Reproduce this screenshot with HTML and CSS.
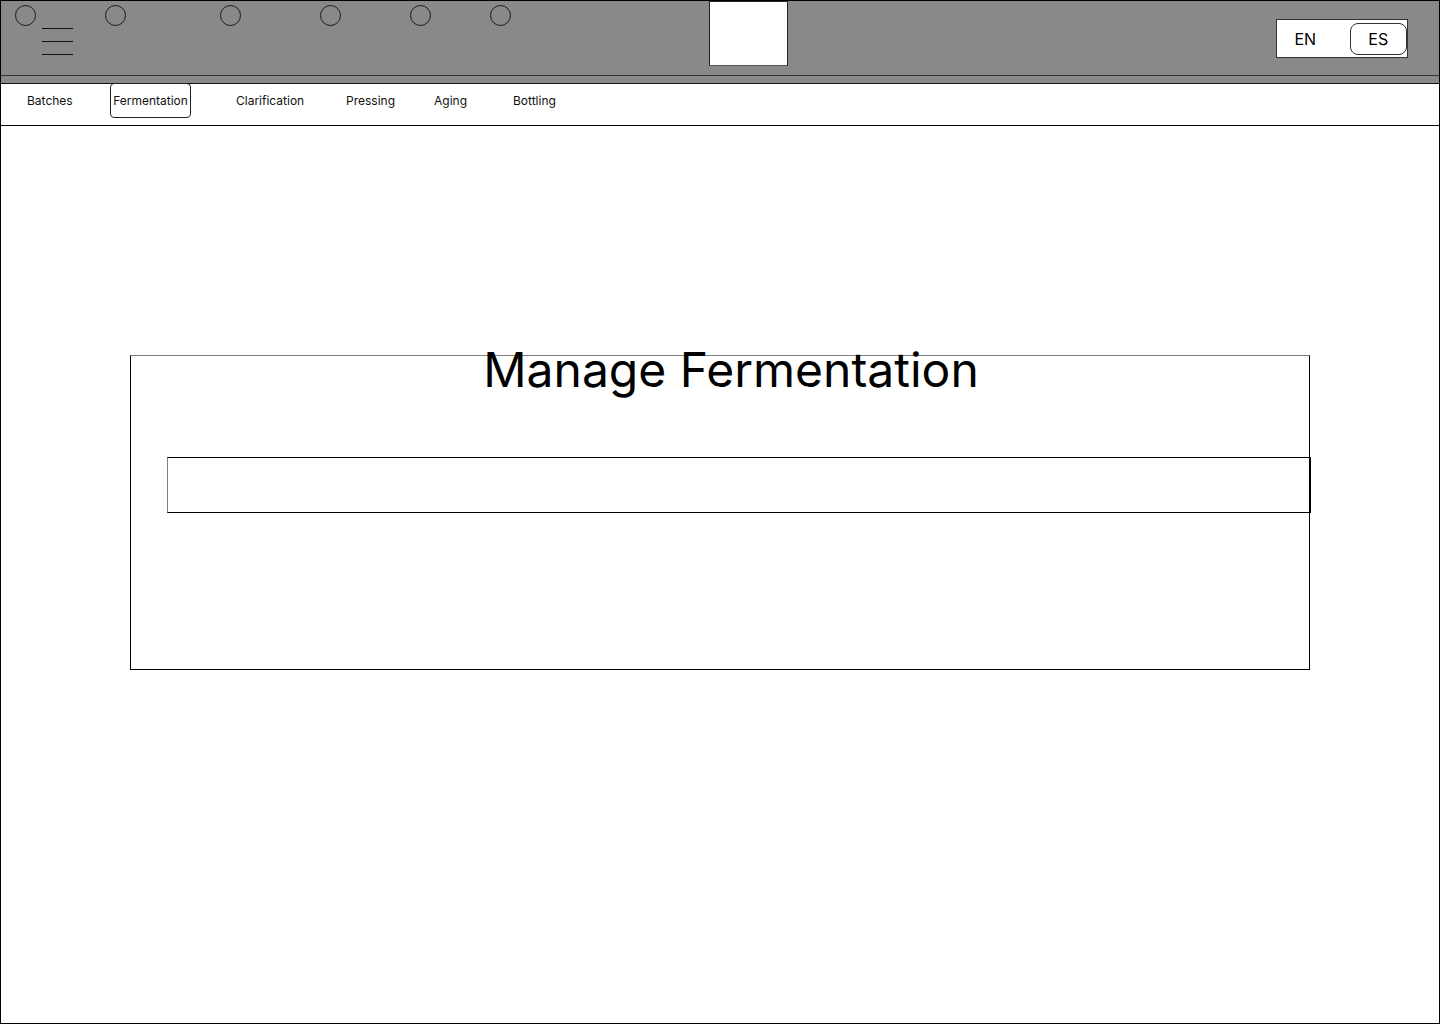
FILE: index.html
```html
<!DOCTYPE html>
<html lang="en">
<head>
<meta charset="utf-8">
<title>Manage Fermentation</title>
<link rel="stylesheet" href="styles.css">
</head>
<body>
<div class="page">
  <header class="topbar">
    <div class="dots">
      <span class="dot d1"></span>
      <span class="dot d2"></span>
      <span class="dot d3"></span>
      <span class="dot d4"></span>
      <span class="dot d5"></span>
      <span class="dot d6"></span>
    </div>
    <div class="burger"><span></span><span></span><span></span></div>
    <div class="logo"></div>
    <div class="lang">
      <span class="lang-opt">EN</span>
      <span class="lang-opt active">ES</span>
    </div>
  </header>
  <div class="strip"></div>
  <nav class="tabs">
    <span class="tab t1">Batches</span>
    <span class="tab t2 active">Fermentation</span>
    <span class="tab t3">Clarification</span>
    <span class="tab t4">Pressing</span>
    <span class="tab t5">Aging</span>
    <span class="tab t6">Bottling</span>
  </nav>
  <main class="main">
    <section class="card">
      <h1 class="title">Manage Fermentation</h1>
      <div class="field"></div>
    </section>
  </main>
</div>
</body>
</html>
```

FILE: styles.css
```css
* { box-sizing: border-box; }
html, body { margin: 0; padding: 0; }
body {
  font-family: Inter, "Noto Sans", "Liberation Sans", sans-serif;
  color: #000;
  background: #fff;
}
.page {
  width: 1440px;
  height: 1024px;
  border: 1px solid #000;
  display: flex;
  flex-direction: column;
  overflow: hidden;
}
.topbar {
  position: relative;
  height: 75px;
  background: #898989;
  border-bottom: 1px solid #333;
  flex: none;
}
.dots { position: absolute; left: 0; top: 0; }
.dot {
  position: absolute;
  top: 4px;
  width: 21px;
  height: 21px;
  border: 1.5px solid #1a1a1a;
  border-radius: 50%;
}
.d1 { left: 14px; }
.d2 { left: 104px; }
.d3 { left: 219px; }
.d4 { left: 319px; }
.d5 { left: 409px; }
.d6 { left: 489px; }
.burger {
  position: absolute;
  left: 41px;
  top: 27px;
  width: 31px;
  display: flex;
  flex-direction: column;
  gap: 12px;
}
.burger span { display: block; height: 1px; background: #111; }
.logo {
  position: absolute;
  left: 708px;
  top: 0;
  width: 79px;
  height: 65px;
  background: #fff;
  border: 1px solid #222;
  border-bottom-color: #555;
}
.lang {
  position: absolute;
  left: 1275px;
  top: 18px;
  width: 132px;
  height: 39px;
  background: #fff;
  border: 1px solid #333;
  display: flex;
  align-items: center;
}
.lang-opt {
  font-size: 16px;
  display: flex;
  align-items: center;
  justify-content: center;
}
.lang-opt:first-child { width: 57px; }
.lang-opt.active {
  margin-left: 16px;
  width: 58px;
  height: 32px;
  border: 1px solid #333;
  border-radius: 8px;
}
.strip {
  height: 8px;
  background: #898989;
  border-bottom: 1px solid #111;
  flex: none;
}
.tabs {
  position: relative;
  height: 42px;
  border-bottom: 1px solid #000;
  flex: none;
  font-size: 12px;
}
.tab {
  position: absolute;
  top: -1px;
  height: 35px;
  display: flex;
  align-items: center;
  justify-content: center;
  color: #111;
}
.t1 { left: 26px; }
.t2 { left: 109px; width: 81px; }
.t3 { left: 235px; }
.t4 { left: 345px; }
.t5 { left: 433px; }
.t6 { left: 512px; }
.tab.active {
  border: 1px solid #222;
  border-radius: 4px;
}
.main {
  flex: 1;
  padding: 229px 0 0 129px;
}
.card {
  width: 1180px;
  height: 315px;
  border: 1px solid #000;
  border-top-color: #808080;
  display: flex;
  flex-direction: column;
}
.title {
  margin: -15px 0 0;
  font-size: 48px;
  font-weight: 400;
  line-height: 58px;
  text-align: center;
  padding-left: 22px;
}
.field {
  margin: 58px -2px 0 36px;
  height: 56px;
  border: 1px solid #000;
  border-left-color: #808080;
}
```
